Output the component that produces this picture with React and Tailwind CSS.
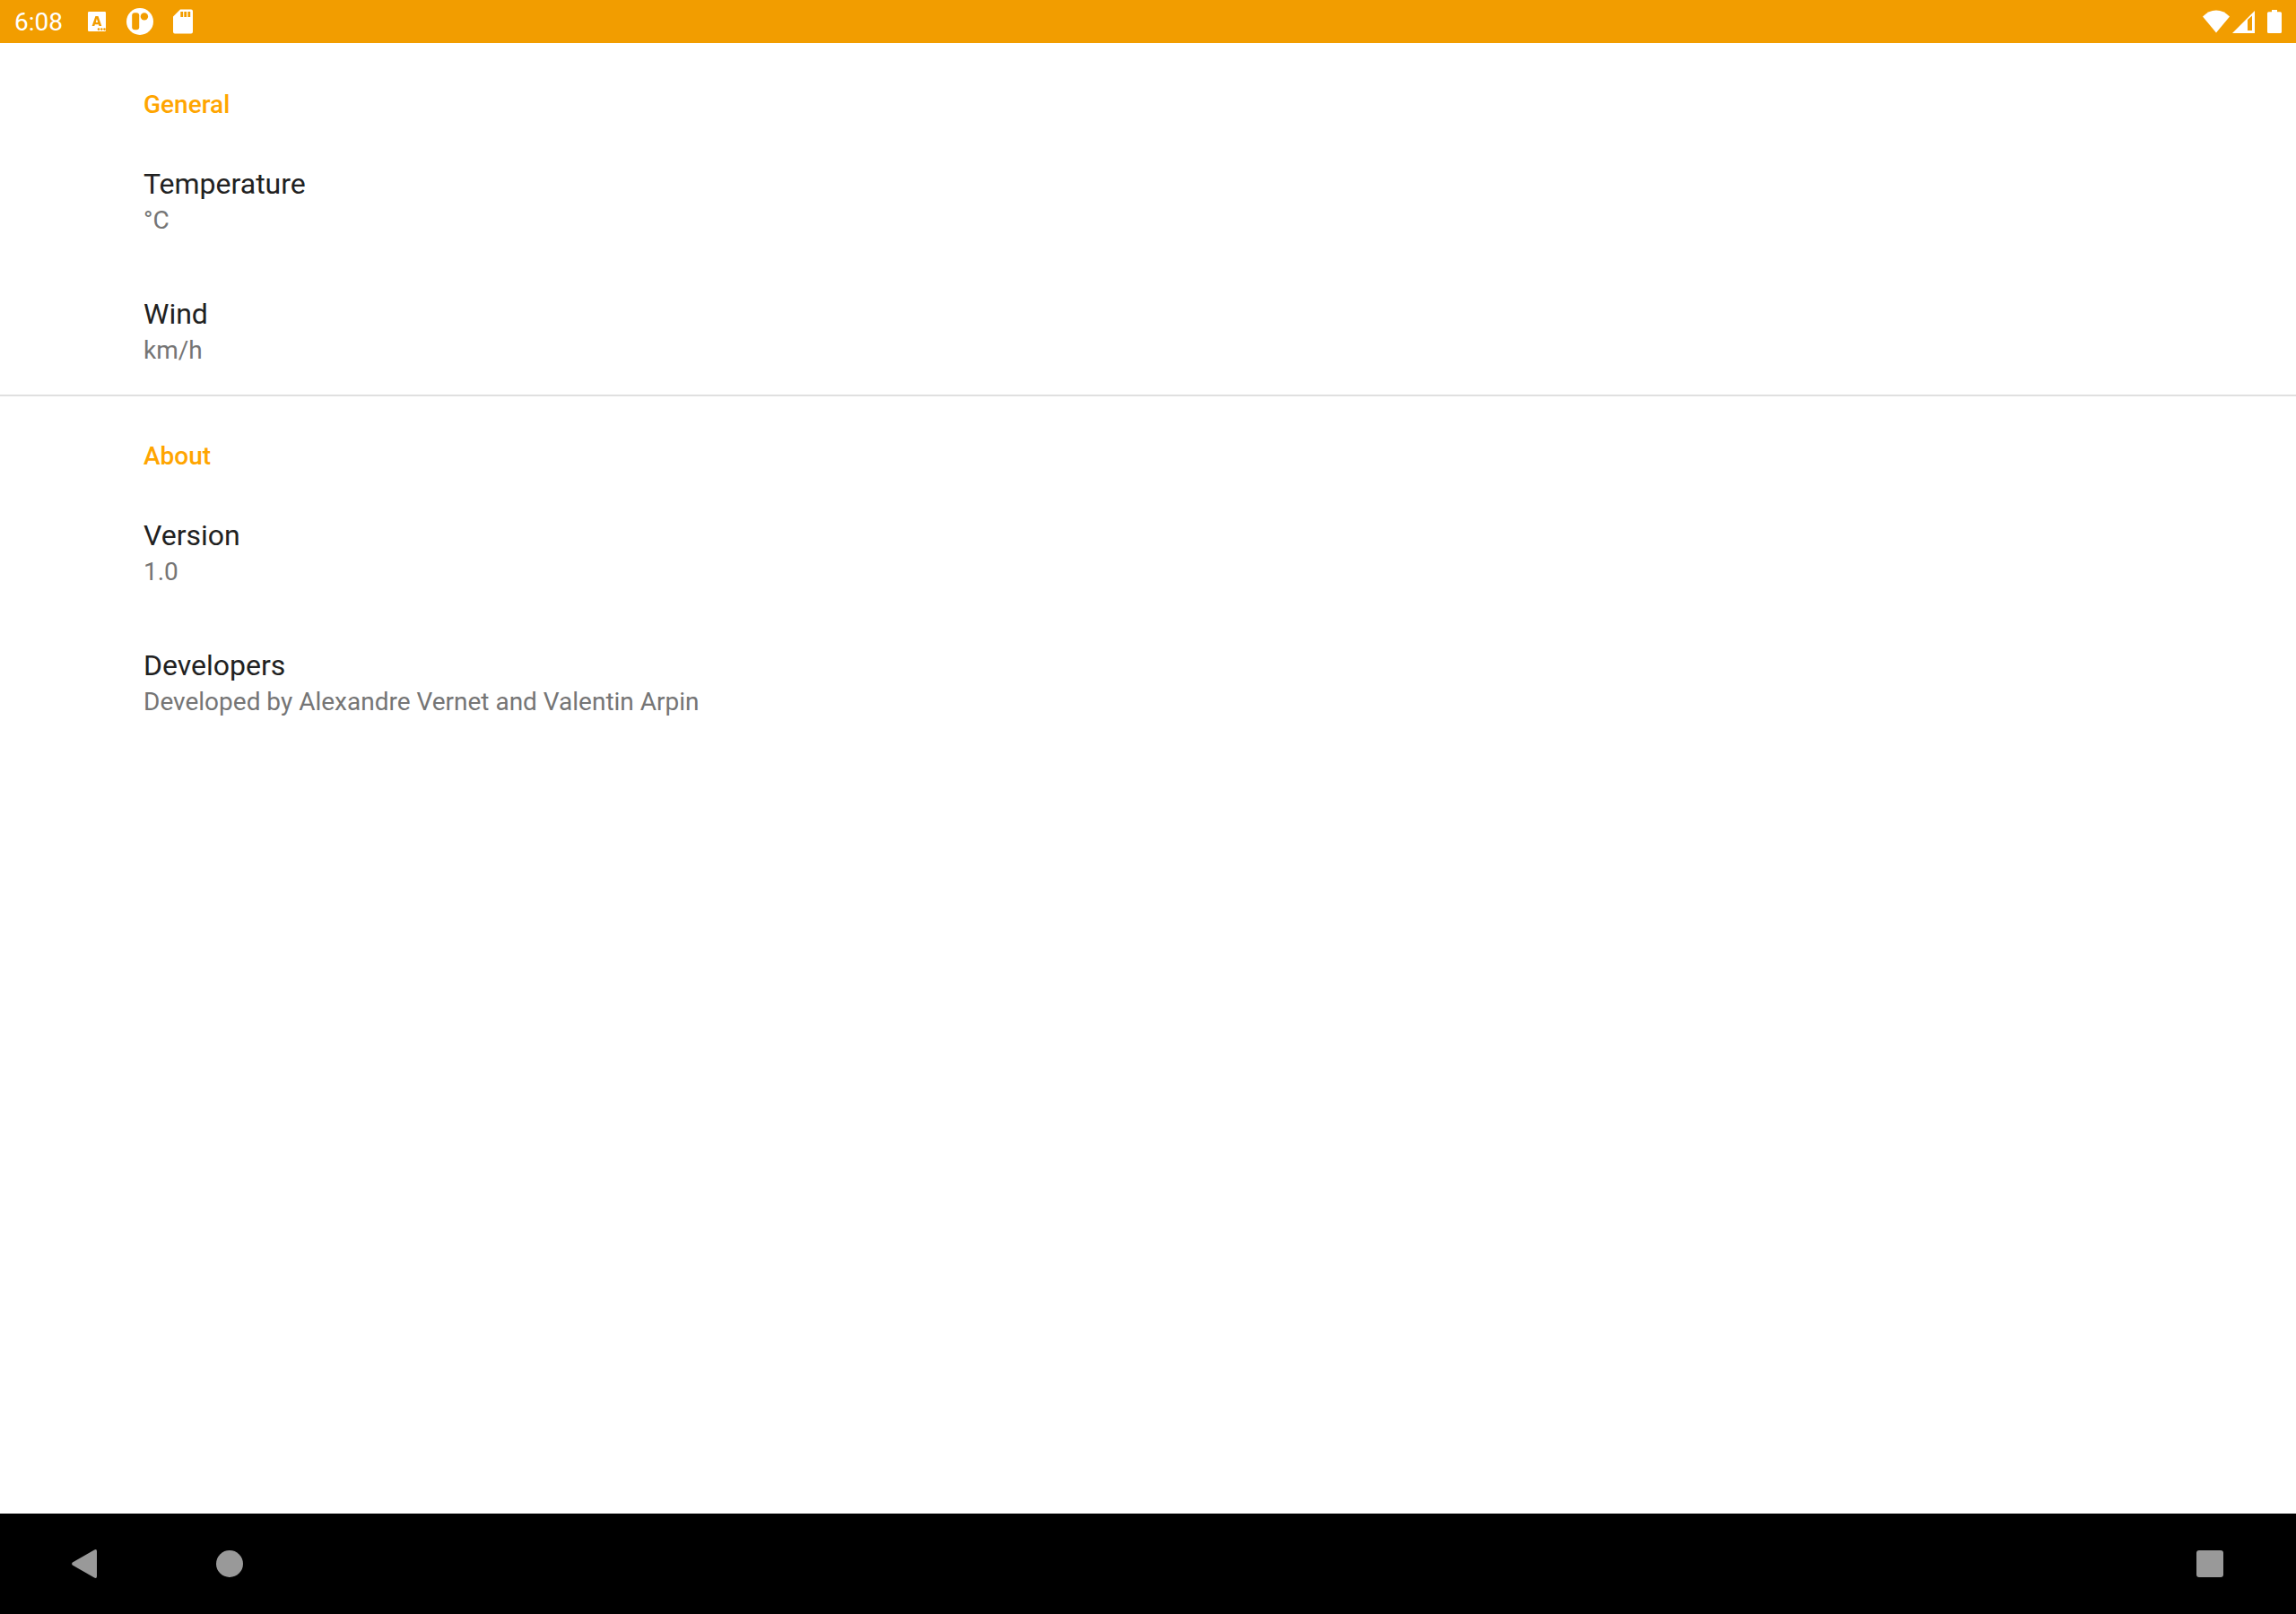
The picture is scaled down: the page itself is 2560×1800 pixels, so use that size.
const sections = [
  {
    title: "General",
    divider: false,
    items: [
      { title: "Temperature", summary: "°C" },
      { title: "Wind", summary: "km/h" },
    ],
  },
  {
    title: "About",
    divider: true,
    items: [
      { title: "Version", summary: "1.0" },
      { title: "Developers", summary: "Developed by Alexandre Vernet and Valentin Arpin" },
    ],
  },
];

function KeyboardIcon() {
  return (
    <svg className="h-8 w-8" viewBox="0 0 32 32" aria-hidden="true">
      <path
        fill="white"
        fillRule="evenodd"
        d="M7.200 5H24.800Q26 5 26 6.200V25.800Q26 27 24.800 27H7.200Q6 27 6 25.800V6.200Q6 5 7.200 5ZM14.400 10L10.600 21H13.300L13.900 19.200H17.900L18.500 21H21.300L17.500 10ZM15.900 12.800L17.100 17H14.800Z"
      />
      <g fill="#f29d00">
        <circle cx="18" cy="24.600" r="1.300" />
        <circle cx="21.300" cy="24.600" r="1.300" />
        <circle cx="24.500" cy="24.600" r="1.300" />
      </g>
    </svg>
  );
}

function AppIcon() {
  return (
    <svg className="h-8 w-8" viewBox="0 0 32 32" aria-hidden="true">
      <circle cx="16" cy="16" r="15" fill="white" />
      <rect x="7.200" y="6.300" width="8" height="19" rx="3" fill="#f29d00" />
      <circle cx="20.900" cy="10.400" r="4.200" fill="#f29d00" />
    </svg>
  );
}

function SdCardIcon() {
  return (
    <svg className="h-8 w-8" viewBox="0 0 32 32" aria-hidden="true">
      <path
        fill="white"
        fillRule="evenodd"
        d="M13 2.500H25Q27 2.500 27 4.500V27.500Q27 29.500 25 29.500H7Q5 29.500 5 27.500V10.500ZM13.300 5V11H16.100V5ZM17.300 5V11H20.100V5ZM21.400 5V11H24.200V5Z"
      />
    </svg>
  );
}

function StatusBar() {
  return (
    <header className="flex h-12 items-center justify-between bg-[#f29d00] px-4 text-white">
      <div className="flex items-center gap-4">
        <time className="mr-1.5 pt-0.5 text-[28px] leading-8">6:08</time>
        <KeyboardIcon />
        <AppIcon />
        <SdCardIcon />
      </div>
      <div className="flex items-center">
        <svg className="h-8 w-8" viewBox="0 0 32 32" fill="white" role="img" aria-label="Wi-Fi">
          <path d="M15 28.500L0 10.500Q6.500 3.500 15 3.500T30 10.500Z" />
        </svg>
        <svg className="h-8 w-8" viewBox="0 0 32 32" fill="white" role="img" aria-label="Mobile signal">
          <path fillRule="evenodd" d="M26 4V29H1ZM23 9.500L18 14V26H23Z" />
        </svg>
        <svg className="h-8 w-6" viewBox="0 0 24 32" fill="white" role="img" aria-label="Battery">
          <path d="M13 3H19V5.300H22.500Q24 5.300 24 6.800V27.500Q24 29 22.500 29H9.500Q8 29 8 27.500V6.800Q8 5.300 9.500 5.300H13Z" />
        </svg>
      </div>
    </header>
  );
}

function Preference({ title, summary }) {
  return (
    <button type="button" className="block w-full px-40 pt-[34px] pb-[30px] text-left">
      <span className="block text-[32px] leading-[43px] text-[#212121]">{title}</span>
      <span className="block text-[28px] leading-[38px] text-[#757575]">{summary}</span>
    </button>
  );
}

function NavigationBar() {
  return (
    <nav className="flex h-28 items-stretch bg-black px-4 text-[#999999]">
      <button type="button" aria-label="Back" className="flex w-40 items-center justify-center">
        <svg className="h-10 w-10" viewBox="0 0 40 40" fill="currentColor">
          <path d="M4.800 18.600L29.200 4.400Q32 3.200 32 6V34Q32 36.800 29.200 35.600L4.800 21.400Q3.200 20 4.800 18.600Z" />
        </svg>
      </button>
      <button type="button" aria-label="Home" className="flex w-40 items-center justify-center">
        <span className="h-[30px] w-[30px] rounded-full bg-[#999999]" />
      </button>
      <button type="button" aria-label="Recent apps" className="ml-auto flex w-40 items-center justify-center">
        <span className="h-[30px] w-[30px] rounded-[3px] bg-[#999999]" />
      </button>
    </nav>
  );
}

export default function App() {
  return (
    <div className="flex min-h-screen flex-col bg-white font-['Roboto',sans-serif]">
      <StatusBar />
      <main className="flex-1">
        {sections.map((section) => (
          <section
            key={section.title}
            className={section.divider ? "border-t-2 border-[#e0e0e0]" : "border-t-2 border-transparent"}
          >
            <h2 className="px-40 pt-12 pb-[14px] text-[28px] leading-[38px] font-medium text-[#ffa500]">
              {section.title}
            </h2>
            {section.items.map((item) => (
              <Preference key={item.title} title={item.title} summary={item.summary} />
            ))}
          </section>
        ))}
      </main>
      <NavigationBar />
    </div>
  );
}
